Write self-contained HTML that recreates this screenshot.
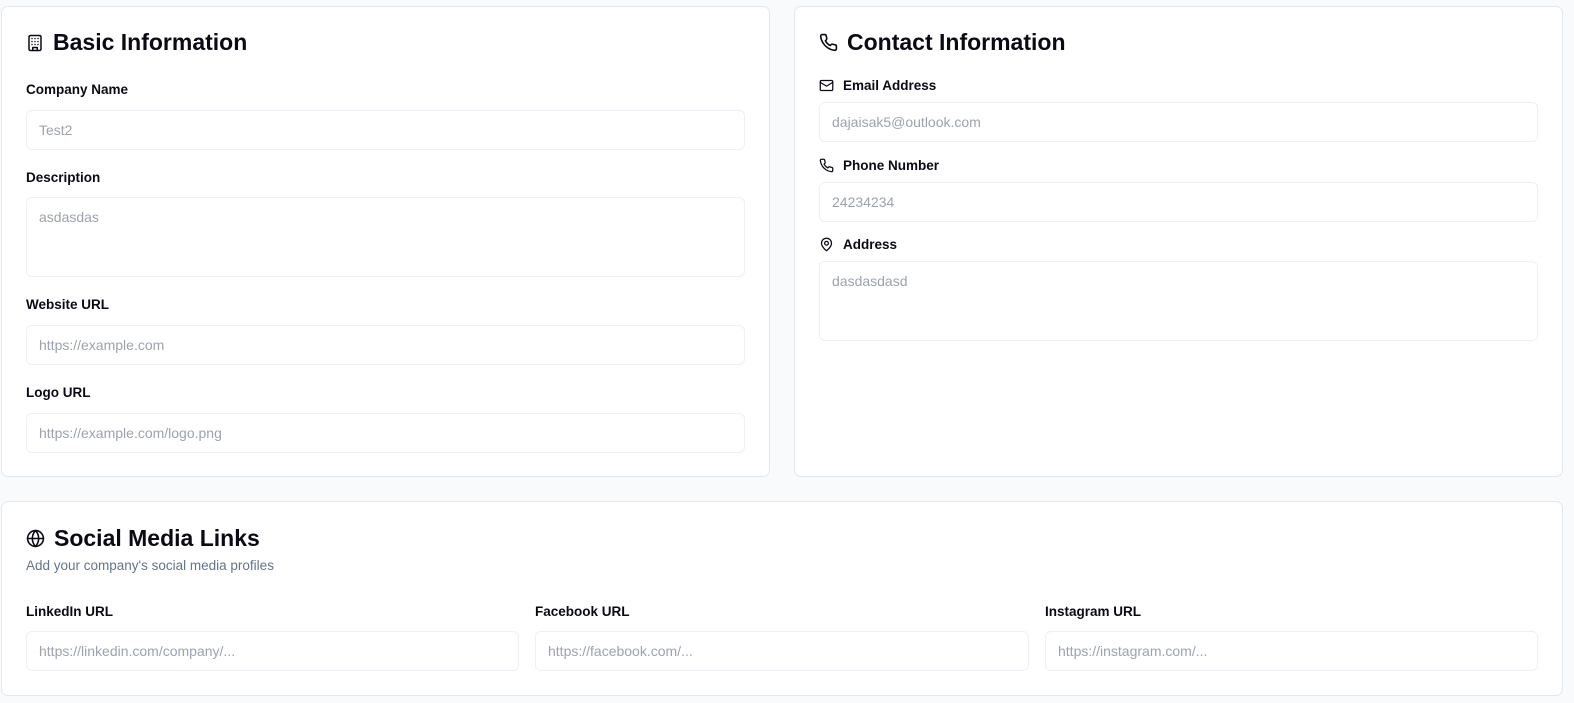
<!DOCTYPE html>
<html><head><style>
*{box-sizing:border-box;margin:0;padding:0}
body{width:1574px;height:703px;background:#f8fafc;font-family:"Liberation Sans",sans-serif;position:relative;overflow:hidden;color:#0a0a14}
.card{position:absolute;background:#fff;border:1px solid #e2e8f0;border-radius:7px}
.h{position:absolute;font-size:23px;font-weight:700;letter-spacing:0;display:flex;align-items:center;gap:9px}
.l{position:absolute;font-size:13.5px;font-weight:700;display:flex;align-items:center;gap:9px}
.i{position:absolute;border:1px solid #edf0f4;border-radius:6px;height:40px;font-size:14px;color:#9ca3af;padding:11px 12px}
.t{height:80px}
svg{fill:none;stroke:#0a0a14;stroke-width:2;stroke-linecap:round;stroke-linejoin:round}
</style></head><body>
<div class="card" style="left:1px;top:6px;width:769px;height:471px"></div>
<div class="card" style="left:794px;top:6px;width:769px;height:471px"></div>
<div class="card" style="left:1px;top:501px;width:1562px;height:195px"></div>

<div class="h" style="left:26px;top:29px"><svg width="18" height="18" viewBox="0 0 24 24"><rect x="4" y="2" width="16" height="20" rx="2"/><path d="M9 22v-4h6v4M8 6h.01M16 6h.01M12 6h.01M12 10h.01M12 14h.01M16 10h.01M16 14h.01M8 10h.01M8 14h.01"/></svg>Basic Information</div>
<div class="l" style="left:26px;top:82px">Company Name</div>
<div class="i" style="left:26px;top:110px;width:719px">Test2</div>
<div class="l" style="left:26px;top:170px">Description</div>
<div class="i t" style="left:26px;top:197px;width:719px">asdasdas</div>
<div class="l" style="left:26px;top:297px">Website URL</div>
<div class="i" style="left:26px;top:325px;width:719px">https://example.com</div>
<div class="l" style="left:26px;top:385px">Logo URL</div>
<div class="i" style="left:26px;top:413px;width:719px">https://example.com/logo.png</div>

<div class="h" style="left:819px;top:29px"><svg width="19" height="19" viewBox="0 0 24 24"><path d="M22 16.9v3a2 2 0 0 1-2.2 2 19.8 19.8 0 0 1-8.6-3.1 19.5 19.5 0 0 1-6-6A19.8 19.8 0 0 1 2.1 4.2 2 2 0 0 1 4.1 2h3a2 2 0 0 1 2 1.7c.1 1 .4 1.9.7 2.8a2 2 0 0 1-.5 2.1L8.1 9.9a16 16 0 0 0 6 6l1.3-1.3a2 2 0 0 1 2.1-.4c.9.3 1.8.6 2.8.7a2 2 0 0 1 1.7 2z"/></svg>Contact Information</div>
<div class="l" style="left:819px;top:78px"><svg width="15" height="15" viewBox="0 0 24 24"><rect x="2" y="4" width="20" height="16" rx="2"/><path d="m22 7-10 6L2 7"/></svg>Email Address</div>
<div class="i" style="left:819px;top:102px;width:719px">dajaisak5@outlook.com</div>
<div class="l" style="left:819px;top:158px"><svg width="15" height="15" viewBox="0 0 24 24"><path d="M22 16.9v3a2 2 0 0 1-2.2 2 19.8 19.8 0 0 1-8.6-3.1 19.5 19.5 0 0 1-6-6A19.8 19.8 0 0 1 2.1 4.2 2 2 0 0 1 4.1 2h3a2 2 0 0 1 2 1.7c.1 1 .4 1.9.7 2.8a2 2 0 0 1-.5 2.1L8.1 9.9a16 16 0 0 0 6 6l1.3-1.3a2 2 0 0 1 2.1-.4c.9.3 1.8.6 2.8.7a2 2 0 0 1 1.7 2z"/></svg>Phone Number</div>
<div class="i" style="left:819px;top:182px;width:719px">24234234</div>
<div class="l" style="left:819px;top:237px"><svg width="15" height="15" viewBox="0 0 24 24"><path d="M20 10c0 6-8 12-8 12s-8-6-8-12a8 8 0 0 1 16 0z"/><circle cx="12" cy="10" r="3"/></svg>Address</div>
<div class="i t" style="left:819px;top:261px;width:719px">dasdasdasd</div>

<div class="h" style="left:26px;top:525px"><svg width="19" height="19" viewBox="0 0 24 24"><circle cx="12" cy="12" r="10"/><path d="M2 12h20M12 2a15 15 0 0 1 4 10 15 15 0 0 1-4 10 15 15 0 0 1-4-10 15 15 0 0 1 4-10z"/></svg>Social Media Links</div>
<div style="position:absolute;left:26px;top:558px;font-size:13.5px;color:#64748b">Add your company's social media profiles</div>
<div class="l" style="left:26px;top:604px">LinkedIn URL</div>
<div class="i" style="left:26px;top:631px;width:493px">https://linkedin.com/company/...</div>
<div class="l" style="left:535px;top:604px">Facebook URL</div>
<div class="i" style="left:535px;top:631px;width:494px">https://facebook.com/...</div>
<div class="l" style="left:1045px;top:604px">Instagram URL</div>
<div class="i" style="left:1045px;top:631px;width:493px">https://instagram.com/...</div>
</body></html>
